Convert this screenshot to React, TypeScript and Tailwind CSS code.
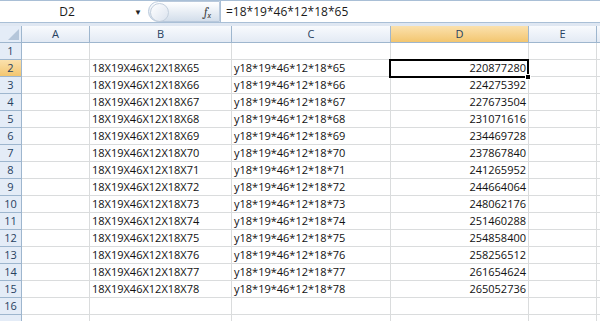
import React from "react";

const cols = ["A", "B", "C", "D", "E", ""];

const rows = Array.from({ length: 14 }, (_, i) => {
  const n = 65 + i;
  return {
    b: `18X19X46X12X18X${n}`,
    c: `y18*19*46*12*18*${n}`,
    d: String(18 * 19 * 46 * 12 * 18 * n),
  };
});

function ColHeader({ label, active }: { label: string; active?: boolean }) {
  return (
    <div
      className={`flex h-[17px] items-center justify-center border-r border-b border-[#9eb6ce] text-[11px] text-[#27415f] ${
        active
          ? "bg-gradient-to-b from-[#fbe1ad] to-[#f3c66f]"
          : "bg-gradient-to-b from-[#f8fafd] to-[#e3eaf4]"
      }`}
    >
      {label}
    </div>
  );
}

function RowHeader({ n, active }: { n?: number; active?: boolean }) {
  return (
    <div
      className={`flex h-[17px] items-center justify-center border-r border-b border-[#9eb6ce] text-[11px] text-[#27415f] ${
        active ? "bg-gradient-to-b from-[#fbe1ad] to-[#f3c66f]" : "bg-[#e4ecf7]"
      }`}
    >
      {n}
    </div>
  );
}

function Cell({ children, right }: { children?: React.ReactNode; right?: boolean }) {
  return (
    <div
      className={`flex h-[17px] items-center overflow-hidden whitespace-nowrap border-r border-b border-[#dadcdd] px-[2px] text-[11px] text-[#111] ${
        right ? "justify-end" : ""
      }`}
    >
      {children}
    </div>
  );
}

export default function App() {
  return (
    <div
      className="h-[321px] w-[600px] overflow-hidden bg-white"
      style={{ fontFamily: '"Open Sans", "Liberation Sans", sans-serif' }}
    >
      {/* formula bar */}
      <div className="flex h-[23px] border-t border-b border-[#a9bfd6] bg-white">
        <div className="flex w-[148px] items-center">
          <span className="w-[134px] text-center text-[12px] text-[#1a1a1a]">D2</span>
          <span className="text-[8px] text-[#222]">▼</span>
        </div>
        <div className="relative flex w-[72px] items-center justify-end rounded-l-full border border-[#b9c9dc] bg-gradient-to-b from-[#ffffff] to-[#d3deeb] pr-[8px]">
          <div className="absolute left-[1px] top-[1px] h-[19px] w-[19px] rounded-full border border-[#c3cfdd] bg-gradient-to-br from-[#ffffff] to-[#dbe3ee]" />
          <span className="font-serif text-[12px] italic text-[#3a3a3a]">
            f<sub className="text-[8px]">x</sub>
          </span>
        </div>
        <div className="flex flex-1 items-center border-l border-[#a9bfd6] pl-[5px] text-[12px] text-[#1a1a1a]">
          =18*19*46*12*18*65
        </div>
      </div>
      <div className="h-[3px] bg-[#dfe7f2]" />

      {/* grid */}
      <div className="relative grid grid-cols-[22px_68px_142px_159px_138px_68px_1fr]">
        <div className="relative h-[17px] border-r border-b border-[#9eb6ce] bg-[#e4ecf7]">
          <div className="absolute bottom-[2px] right-[2px] h-0 w-0 border-b-[11px] border-l-[11px] border-b-[#b5c6da] border-l-transparent" />
        </div>
        {cols.map((c) => (
          <ColHeader key={c || "x"} label={c} active={c === "D"} />
        ))}

        <RowHeader n={1} />
        {cols.map((c) => (
          <Cell key={"r1" + c} />
        ))}

        {rows.map((r, i) => (
          <React.Fragment key={i}>
            <RowHeader n={i + 2} active={i === 0} />
            <Cell />
            <Cell>{r.b}</Cell>
            <Cell>{r.c}</Cell>
            <Cell right>{r.d}</Cell>
            <Cell />
            <Cell />
          </React.Fragment>
        ))}

        <RowHeader n={16} />
        {cols.map((c) => (
          <Cell key={"r16" + c} />
        ))}
        <RowHeader />
        {cols.map((c) => (
          <Cell key={"r17" + c} />
        ))}

        {/* active cell D2 */}
        <div className="pointer-events-none absolute left-[389px] top-[33px] h-[19px] w-[140px] border-2 border-black" />
        <div className="absolute left-[525px] top-[48px] h-[6px] w-[6px] border border-white bg-black" />
      </div>
    </div>
  );
}
